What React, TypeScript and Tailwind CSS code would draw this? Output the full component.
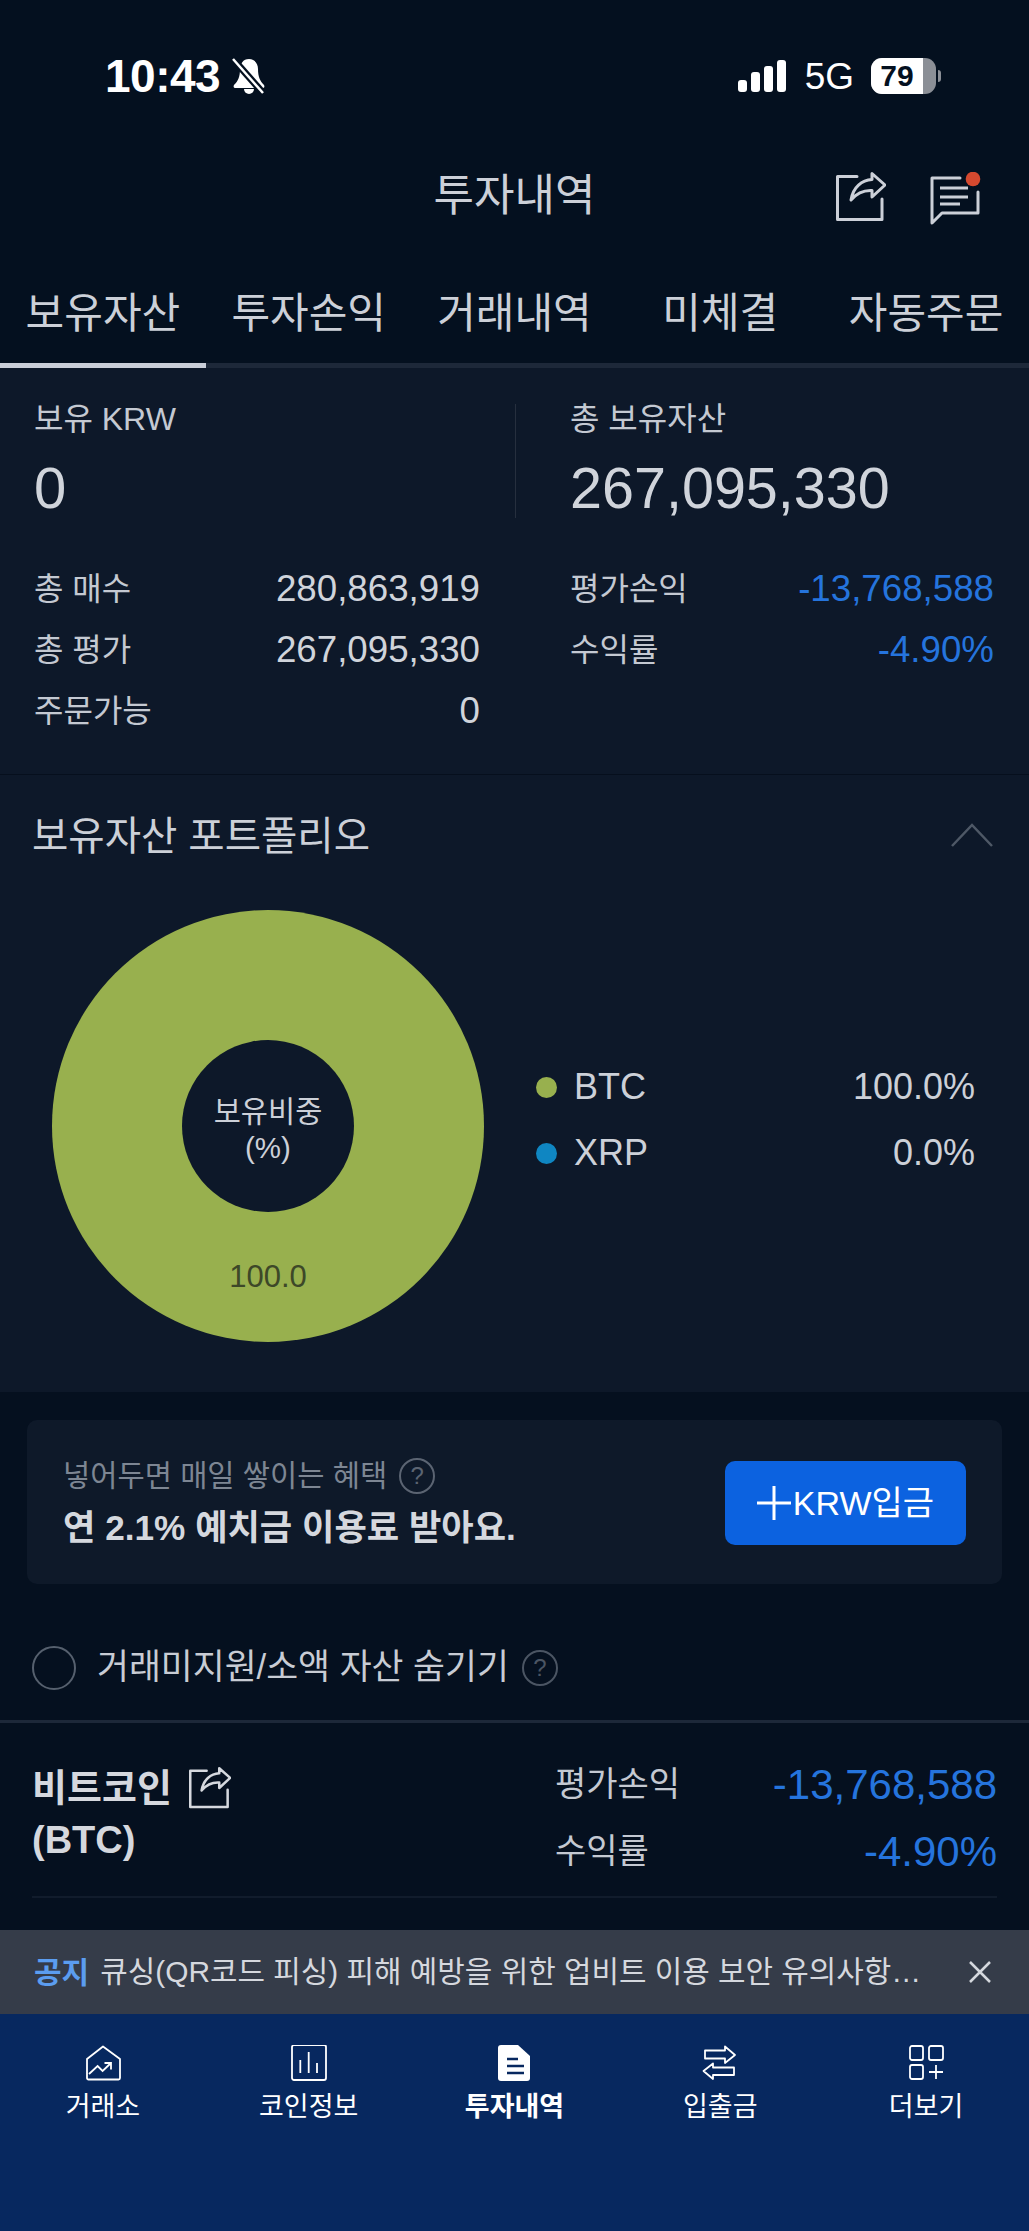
const tabs = ["보유자산", "투자손익", "거래내역", "미체결", "자동주문"];

function ShareIcon({ className }: { className: string }) {
  return (
    <svg viewBox="0 0 50 50" fill="none" stroke="currentColor" className={className}>
      <path d="M21 4.5H1.5v43H46V27" strokeWidth="3" strokeLinejoin="round" strokeLinecap="round" />
      <path
        d="M15 28C17 15 26 8 36 7.5V1.5L49 13 36 25v-6.5C27 18 20 22 15 28z"
        strokeWidth="3"
        strokeLinejoin="round"
      />
    </svg>
  );
}

function MessageIcon() {
  return (
    <svg viewBox="0 0 52 54" fill="none" stroke="#ccd0d8" className="h-[54px] w-[52px]">
      <path d="M30 6H2v45l10-10h36V20" strokeWidth="3" strokeLinejoin="round" strokeLinecap="round" />
      <path d="M10 16h28M10 25h28M10 32h20" strokeWidth="3" />
      <circle cx="43" cy="7" r="7.3" fill="#d5492f" stroke="none" />
    </svg>
  );
}

function MutedBell() {
  return (
    <svg viewBox="0 0 34 36" className="ml-[11px] h-[36px] w-[34px]">
      <path
        d="M18 1c-6 0-9 5-9 10 0 8-2 12-6 16-1 2 0 3 2 3h26c2 0 3-1 2-3-4-4-6-8-6-16 0-5-3-10-9-10z"
        fill="#fff"
      />
      <path d="M13 31a5 5 0 0 0 10 0z" fill="#fff" />
      <path d="M2 1l30 34" stroke="#04101f" strokeWidth="7" />
      <path d="M2 1l30 34" stroke="#fff" strokeWidth="2.5" />
    </svg>
  );
}

function HelpIcon({ className }: { className: string }) {
  return (
    <span
      className={`flex h-[36px] w-[36px] items-center justify-center rounded-full border-2 text-[24px] leading-none ${className}`}
    >
      ?
    </span>
  );
}

function NavIcon({ index }: { index: number }) {
  if (index === 2) {
    return (
      <svg viewBox="0 0 36 36" className="h-[36px] w-[36px]">
        <path
          d="M2 3a3 3 0 0 1 3-3h17l12 11v22a3 3 0 0 1-3 3H5a3 3 0 0 1-3-3z"
          fill="#fff"
        />
        <path d="M11 14h11M11 21h17M11 28h17" stroke="#07285f" strokeWidth="2.5" />
      </svg>
    );
  }
  const paths = [
    <>
      <path d="M18 1.5L35 14v19a1.5 1.5 0 0 1-1.5 1.5h-30A1.5 1.5 0 0 1 2 33V14z" strokeLinejoin="round" />
      <path d="M4 29l8.6-8 5 5L26 18M19.5 18H26v6.5" />
    </>,
    <>
      <rect x="1" y="0" width="34" height="35" rx="2" />
      <path d="M9.3 28V15M17.7 28V7M26 28V18" />
    </>,
    null,
    <>
      <path d="M3 5.5h20v-4L33 10l-10 8v-4.500H3z" strokeLinejoin="round" />
      <path d="M32 22.500H11v-4L1.500 26l9.500 8v-4h21z" strokeLinejoin="round" />
    </>,
    <>
      <rect x="2" y="1" width="13" height="14" rx="2" />
      <rect x="21" y="1" width="14" height="14" rx="2" />
      <rect x="2" y="20" width="13" height="14" rx="2" />
      <path d="M21 27h14M28 20v14" />
    </>,
  ];
  return (
    <svg viewBox="0 0 36 36" fill="none" stroke="#fff" strokeWidth="1.8" className="h-[36px] w-[36px]">
      {paths[index]}
    </svg>
  );
}

const navItems = ["거래소", "코인정보", "투자내역", "입출금", "더보기"];

function StatRow({ label, value, blue }: { label: string; value: string; blue?: boolean }) {
  return (
    <div className="flex h-[61px] items-center justify-between">
      <span className="text-[32px] text-[#c4c9d2]">{label}</span>
      <span className={`text-[36.7px] ${blue ? "text-[#2574dd]" : "text-[#d0d4db]"}`}>{value}</span>
    </div>
  );
}

export default function App() {
  return (
    <div
      className="flex h-[2231px] w-[1029px] flex-col overflow-hidden bg-[#05101f]"
      style={{ fontFamily: '"Liberation Sans", "Noto Sans CJK KR", sans-serif' }}
    >
      {/* Status bar */}
      <div className="flex h-[152px] bg-[#04101f] pl-[105px] pr-[88px] pt-[53px]">
        <div className="flex h-[46px] items-center text-white">
          <span className="text-[46px] font-bold leading-none tracking-[-0.5px]">10:43</span>
          <MutedBell />
        </div>
        <div className="ml-auto flex h-[46px] items-center text-white">
          <div className="flex items-end gap-[4px]">
            <div className="h-[12px] w-[9px] rounded-[3px] bg-white" />
            <div className="h-[20px] w-[9px] rounded-[3px] bg-white" />
            <div className="h-[26px] w-[9px] rounded-[3px] bg-white" />
            <div className="h-[32px] w-[9px] rounded-[3px] bg-white" />
          </div>
          <span className="ml-[19px] text-[37px] leading-none">5G</span>
          <div className="ml-[17px] flex h-[36px] w-[65px] items-center overflow-hidden rounded-[11px] bg-[#8b8f96]">
            <div className="flex h-full w-[52px] items-center justify-center bg-white text-[30px] font-bold leading-none text-[#04101f]">
              79
            </div>
          </div>
          <div className="ml-[2px] h-[12px] w-[3px] rounded-r-full bg-[#8b8f96]" />
        </div>
      </div>

      {/* Title */}
      <div className="relative flex h-[86px] items-center justify-center bg-[#04101f]">
        <span className="pt-[2px] text-[44px] text-[#ccd0d8]">투자내역</span>
        <div className="absolute right-[47px] top-[20px] flex gap-[44px] text-[#ccd0d8]">
          <ShareIcon className="h-[50px] w-[50px]" />
          <MessageIcon />
        </div>
      </div>

      {/* Tabs */}
      <div className="grid h-[130px] grid-cols-5 bg-[#04101f]">
        {tabs.map((tab, i) => (
          <div key={tab} className="flex flex-col">
            <div className="flex h-[125px] items-center justify-center pt-[26px] text-[42px] text-[#ccd0d8]">
              {tab}
            </div>
            <div className={`h-[5px] ${i === 0 ? "bg-[#c9ced8]" : "bg-[#1d2839]"}`} />
          </div>
        ))}
      </div>

      {/* Summary */}
      <div className="h-[407px] border-b border-[#060f1d] bg-[#0d1829] pt-[36px]">
        <div className="grid grid-cols-[482px_1fr] gap-x-[54px] pl-[34px] pr-[35px]">
          <div className="h-[114px] border-r border-[#262f3e]">
            <div className="text-[32px] leading-[30px] text-[#c4c9d2]">보유 KRW</div>
            <div className="mt-[21px] text-[58px] leading-[66px] text-[#d0d4db]">0</div>
          </div>
          <div className="h-[114px]">
            <div className="text-[32px] leading-[30px] text-[#c4c9d2]">총 보유자산</div>
            <div className="mt-[21px] text-[57.500px] leading-[66px] text-[#d0d4db]">267,095,330</div>
          </div>
        </div>
        <div className="mt-[40px] grid grid-cols-[446px_1fr] gap-x-[90px] pl-[34px] pr-[35px]">
          <div>
            <StatRow label="총 매수" value="280,863,919" />
            <StatRow label="총 평가" value="267,095,330" />
            <StatRow label="주문가능" value="0" />
          </div>
          <div>
            <StatRow label="평가손익" value="-13,768,588" blue />
            <StatRow label="수익률" value="-4.90%" blue />
          </div>
        </div>
      </div>

      {/* Portfolio */}
      <div className="h-[617px] bg-[#0d1829]">
        <div className="flex h-[120px] items-center justify-between pl-[32px] pr-[36px]">
          <span className="pt-[4px] text-[39.5px] text-[#ccd0d8]">보유자산 포트폴리오</span>
          <svg viewBox="0 0 42 24" fill="none" stroke="#4e5866" strokeWidth="2.5" className="h-[24px] w-[42px]">
            <path d="M1 23L21 2l20 21" />
          </svg>
        </div>
        <div className="flex items-center pl-[52px] pr-[54px] pt-[15px]">
          <div className="relative flex h-[432px] w-[432px] shrink-0 items-center justify-center rounded-full bg-[#98b04e]">
            <div className="flex h-[172px] w-[172px] flex-col items-center justify-center rounded-full bg-[#0d1829] pt-[8px] text-[29.5px] leading-[36px] text-[#ccd0d8]">
              <span>보유비중</span>
              <span>(%)</span>
            </div>
            <span className="absolute bottom-[50px] text-[31px] leading-none text-[#3d4828]">100.0</span>
          </div>
          <div className="mb-[12px] ml-[52px] flex-1">
            <div className="flex h-[66px] items-center">
              <div className="h-[21px] w-[21px] rounded-full bg-[#98b04e]" />
              <span className="ml-[17px] text-[36px] text-[#ccd0d8]">BTC</span>
              <span className="ml-auto text-[36px] text-[#ccd0d8]">100.0%</span>
            </div>
            <div className="flex h-[66px] items-center">
              <div className="h-[21px] w-[21px] rounded-full bg-[#0f86c2]" />
              <span className="ml-[17px] text-[36px] text-[#ccd0d8]">XRP</span>
              <span className="ml-auto text-[36px] text-[#ccd0d8]">0.0%</span>
            </div>
          </div>
        </div>
      </div>

      {/* Deposit banner */}
      <div className="mx-[27px] mt-[28px] flex h-[164px] items-center justify-between rounded-[10px] bg-[#0e1929] pl-[36px] pr-[36px]">
        <div>
          <div className="flex items-center gap-[12px] text-[29.6px] leading-[48px] text-[#7d8693]">
            <span>넣어두면 매일 쌓이는 혜택</span>
            <HelpIcon className="border-[#5b6472] text-[#5b6472]" />
          </div>
          <div className="mt-[4px] text-[35.2px] font-bold leading-[48px] text-[#d5d8de]">
            연 2.1% 예치금 이용료 받아요.
          </div>
        </div>
        <button className="mt-[2px] flex h-[84px] w-[241px] items-center justify-center rounded-[10px] bg-[#0c62e0] text-[34px] text-white">
          <svg viewBox="0 0 34 34" stroke="#fff" strokeWidth="3" className="mr-[2px] h-[34px] w-[34px]">
            <path d="M0 17h34M17 0v34" />
          </svg>
          KRW입금
        </button>
      </div>

      {/* Hide small assets */}
      <div className="flex h-[139px] items-center border-b-[3px] border-[#1d2839] pl-[32px] pt-[31px]">
        <div className="h-[44px] w-[44px] rounded-full border-2 border-[#56606e]" />
        <span className="ml-[21px] text-[34.7px] text-[#c8ccd4]">거래미지원/소액 자산 숨기기</span>
        <HelpIcon className="ml-[13px] border-[#4b5563] text-[#4b5563]" />
      </div>

      {/* BTC row */}
      <div className="mx-[32px] flex h-[175px] border-b-2 border-[#111c2c] pt-[28px]">
        <div className="pt-[11px] text-[38px] font-bold leading-[52px] text-[#d5d8de]">
          <div className="flex items-center">
            비트코인
            <ShareIcon className="ml-[17px] h-[42px] w-[42px]" />
          </div>
          <div>(BTC)</div>
        </div>
        <div className="ml-auto w-[442px]">
          <div className="flex h-[67px] items-center justify-between">
            <span className="text-[34px] text-[#c4c9d2]">평가손익</span>
            <span className="text-[42px] text-[#2574dd]">-13,768,588</span>
          </div>
          <div className="flex h-[67px] items-center justify-between">
            <span className="text-[34px] text-[#c4c9d2]">수익률</span>
            <span className="text-[42px] text-[#2574dd]">-4.90%</span>
          </div>
        </div>
      </div>

      {/* Notice */}
      <div className="mt-[32px] flex h-[84px] items-center bg-[#353c49] pl-[34px] pr-[38px]">
        <span className="text-[30px] font-bold text-[#5b9df0]">공지</span>
        <span className="ml-[11px] text-[29.9px] text-[#d5d8de]">
          큐싱(QR코드 피싱) 피해 예방을 위한 업비트 이용 보안 유의사항…
        </span>
        <svg viewBox="0 0 22 22" stroke="#d5d8de" strokeWidth="2.5" className="ml-auto h-[22px] w-[22px]">
          <path d="M1 1l20 20M21 1L1 21" />
        </svg>
      </div>

      {/* Bottom navigation */}
      <div className="grid flex-1 grid-cols-5 bg-[#07285f] pt-[31px]">
        {navItems.map((item, i) => (
          <div key={item} className="flex flex-col items-center">
            <NavIcon index={i} />
            <span className={`mt-[8px] text-[27px] leading-[36px] text-white ${i === 2 ? "font-bold" : ""}`}>
              {item}
            </span>
          </div>
        ))}
      </div>
    </div>
  );
}
